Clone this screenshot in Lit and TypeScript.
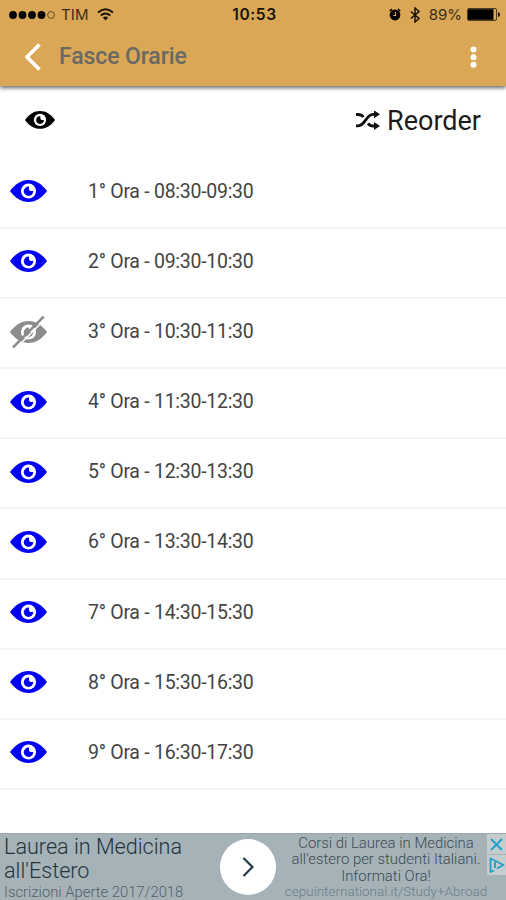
import { LitElement, html, svg, css } from "lit";
import { customElement, property } from "lit/decorators.js";

interface Slot {
  label: string;
  hidden?: boolean;
}

const SLOTS: Slot[] = [
  { label: "1° Ora - 08:30-09:30" },
  { label: "2° Ora - 09:30-10:30" },
  { label: "3° Ora - 10:30-11:30", hidden: true },
  { label: "4° Ora - 11:30-12:30" },
  { label: "5° Ora - 12:30-13:30" },
  { label: "6° Ora - 13:30-14:30" },
  { label: "7° Ora - 14:30-15:30" },
  { label: "8° Ora - 15:30-16:30" },
  { label: "9° Ora - 16:30-17:30" },
];

@customElement("eye-icon")
class EyeIcon extends LitElement {
  @property({ type: Boolean }) off = false;

  static styles = css`
    :host { display: block; width: 37px; }
    svg { display: block; width: 100%; overflow: visible; }
    .ring { fill: #fff; }
    .body { fill: currentColor; }
    .gap { stroke: #fff; stroke-width: 1.600; }
    .slash { stroke: currentColor; stroke-width: 2.600; }
  `;

  render() {
    return html`<svg viewBox="0 0 37 22">
      <path class="body" d="M0 11C5 4.200 11 0 18.500 0S32 4.200 37 11C32 17.800 26 22 18.500 22S5 17.800 0 11Z" />
      <circle class="ring" cx="18.500" cy="11" r="7.600" />
      <circle class="body" cx="18.500" cy="11.200" r="4.700" />
      <path class="ring" d="M19 5.500H22.500L24.500 11H21Q19 11 19 9Z" />
      ${this.off
        ? svg`<path class="gap" d="M5.500 27.800L35.500-2.200" /><path class="slash" d="M3 26.300L33.700-4.400" />`
        : null}
    </svg>`;
  }
}

@customElement("app-root")
class AppRoot extends LitElement {
  static styles = css`
    :host {
      display: flex;
      flex-direction: column;
      height: 900px;
      width: 506px;
      overflow: hidden;
      background: #fff;
      font-family: Roboto, "Liberation Sans", sans-serif;
      color: #333;
    }
    svg { display: block; flex: none; }
    span, div { white-space: nowrap; }
    .header {
      flex: none;
      height: 86px;
      background: #d9a755;
      box-shadow: 0 2px 4px rgba(0, 0, 0, 0.6);
      position: relative;
    }
    .status {
      height: 29px;
      display: grid;
      grid-template-columns: 1fr auto 1fr;
      align-items: center;
      padding: 0 6px 0 9px;
      color: #17120a;
      font-family: Inter, sans-serif;
      font-size: 15px;
      box-sizing: border-box;
    }
    .left, .right { display: flex; align-items: center; }
    .right { justify-content: flex-end; }
    .carrier { margin: 0 8px 0 6px; letter-spacing: 0.1px; color: #3a2e18; }
    .clock { font-weight: 600; font-size: 15.500px; letter-spacing: 0.600px; }
    .percent { margin: 0 5px 0 9px; color: #3a2e18; }
    .bt { margin-left: 9px; }
    .bar { height: 55px; display: flex; align-items: center; padding: 0 28px 0 24px; }
    .title {
      flex: 1;
      margin-left: 18px;
      font-size: 23px;
      letter-spacing: -0.1px;
      font-weight: 500;
      color: #6a6963;
    }
    .tools {
      flex: none;
      height: 72px;
      box-sizing: border-box;
      padding: 0 25px 3px 25px;
      display: flex;
      align-items: center;
      color: #000;
    }
    .tools eye-icon { width: 30px; margin-right: auto; margin-top: -1px; }
    .reorder { font-size: 27px; margin-left: 7px; color: #1c1c1c; }
    .row {
      flex: none;
      height: 70.150px;
      box-sizing: border-box;
      border-bottom: 2px solid #f4f4f4;
      display: flex;
      align-items: center;
      padding: 0 0 3px 10px;
    }
    .tools + .row { margin-top: 0.700px; }
    .row eye-icon { color: #0000f5; }
    .row eye-icon[off] { color: #8c8c8c; }
    .label { margin-left: 41px; font-size: 19.500px; letter-spacing: -0.270px; color: #444; }
    .ad {
      margin-top: auto;
      flex: none;
      height: 67px;
      background: #a5b3b9;
      display: flex;
      box-sizing: border-box;
      border-top: 1px solid #9ba8ad;
      position: relative;
    }
    .pitch { width: 215px; padding-left: 4px; font-weight: 300; color: #263238; }
    .headline { font-size: 21.600px; line-height: 24px; padding-top: 1px; }
    .sub { font-size: 14.800px; line-height: 18px; color: #536068; }
    .go {
      flex: none;
      width: 56px;
      height: 56px;
      margin-top: 5px;
      margin-left: 1px;
      border-radius: 50%;
      background: #fff;
      display: grid;
      place-items: center;
    }
    .copy { width: 220px; flex: none; text-align: center; font-size: 14.900px; line-height: 16.300px; padding-top: 1px; color: #3d4a51; font-weight: 300; }
    .url { color: #6c7c84; font-size: 13.500px; line-height: 15px; }
    .badges { position: absolute; right: 0; top: 0; width: 19px; }
    .badge { height: 20px; background: #c5cccf; margin-bottom: 1px; display: grid; place-items: center; }
  `;

  render() {
    return html`
      <div class="header">
        <div class="status">
          <div class="left">
            <svg width="46" height="10" viewBox="0 0 46 10">
              ${[4, 13.5, 23, 32.5].map((x) => svg`<circle cx=${x} cy="5" r="3.900" fill="#000" />`)}
              <circle cx="42" cy="5" r="3.400" fill="none" stroke="#4b3b20" stroke-width=".8" />
            </svg>
            <span class="carrier">TIM</span>
            <svg width="17" height="13" viewBox="0 0 17 13" fill="none" stroke="#17120a" stroke-width="2">
              <path d="M1 4.500Q8.500-2 16 4.500M3.800 7.500Q8.500 3.500 13.200 7.500" />
              <path d="M5.800 9.500Q8.500 7.500 11.200 9.500L8.500 12.500Z" fill="#17120a" stroke="none" />
            </svg>
          </div>
          <span class="clock">10:53</span>
          <div class="right">
            <svg width="12" height="13" viewBox="0 0 12 13">
              <circle cx="6" cy="7" r="5.400" fill="#000" />
              <path d="M.8 3L3 1M11.200 3L9 1" stroke="#000" stroke-width="1.500" />
              <path d="M6.500 3.800V7.500H4.200" fill="none" stroke="#d9a755" stroke-width="1.200" />
            </svg>
            <svg class="bt" width="10" height="16" viewBox="0 0 10 16" fill="none" stroke="#17120a" stroke-width="1.500">
              <path d="M.8 4.500L9 11.500L5 15V1L9 4.500L.8 11.500" />
            </svg>
            <span class="percent">89%</span>
            <svg width="33" height="13" viewBox="0 0 33 13">
              <rect x=".5" y=".5" width="29" height="12" rx="1.500" fill="none" stroke="#4b3b20" />
              <rect x="1" y="1.200" width="25.500" height="10.600" fill="#000" />
              <path d="M31 4V9Q33 8.500 33 6.500T31 4Z" fill="#17120a" />
            </svg>
          </div>
        </div>
        <div class="bar">
          <svg width="17" height="28" viewBox="0 0 17 28" fill="none" stroke="#fff" stroke-width="3.800" stroke-linejoin="round">
            <path d="M15.500 1.500L3 14L15.500 26.500" />
          </svg>
          <span class="title">Fasce Orarie</span>
          <svg width="8" height="22" viewBox="0 0 8 22" fill="#fff">
            <circle cx="3.500" cy="3.500" r="3" /><circle cx="3.500" cy="11.200" r="3" /><circle cx="3.500" cy="18.800" r="3" />
          </svg>
        </div>
      </div>
      <div class="tools">
        <eye-icon></eye-icon>
        <svg width="24" height="20" viewBox="0 0 24 20">
          <path d="M0 3.500H2Q5.500 3.500 7.500 6M0 14.800H2C9.500 14.800 10 3.300 17 3.300H19M12 12.300Q14 15 17 15H19" fill="none" stroke="#111" stroke-width="2.800" />
          <path d="M18-.7L24 3.300L18 7.300ZM18 11L24 15L18 19Z" fill="#111" />
        </svg>
        <span class="reorder">Reorder</span>
      </div>
      ${SLOTS.map(
        (s) => html`<div class="row">
          <eye-icon ?off=${!!s.hidden}></eye-icon>
          <span class="label">${s.label}</span>
        </div>`
      )}
      <div class="ad">
        <div class="pitch">
          <div class="headline">Laurea in Medicina<br />all'Estero</div>
          <div class="sub">Iscrizioni Aperte 2017/2018</div>
        </div>
        <div class="go">
          <svg width="12" height="20" viewBox="0 0 12 20" fill="none" stroke="#1f3a47" stroke-width="2.200">
            <path d="M1.500 1L10.500 10L1.500 19" />
          </svg>
        </div>
        <div class="copy">
          Corsi di Laurea in Medicina<br />all'estero per studenti Italiani.<br />Informati Ora!
          <div class="url">cepuinternational.it/Study+Abroad</div>
        </div>
        <div class="badges">
          <div class="badge">
            <svg width="13" height="13" viewBox="0 0 13 13" stroke="#1ba1c6" stroke-width="1.800">
              <path d="M1 1L12 12M12 1L1 12" />
            </svg>
          </div>
          <div class="badge">
            <svg width="16" height="16" viewBox="0 0 16 16" fill="none" stroke="#1ba1c6" stroke-width="1.800">
              <path d="M5 13.500L1.500 15V1.500L14.500 8L8 11.500M6 5V11" stroke-linejoin="round" />
            </svg>
          </div>
        </div>
      </div>
    `;
  }
}
